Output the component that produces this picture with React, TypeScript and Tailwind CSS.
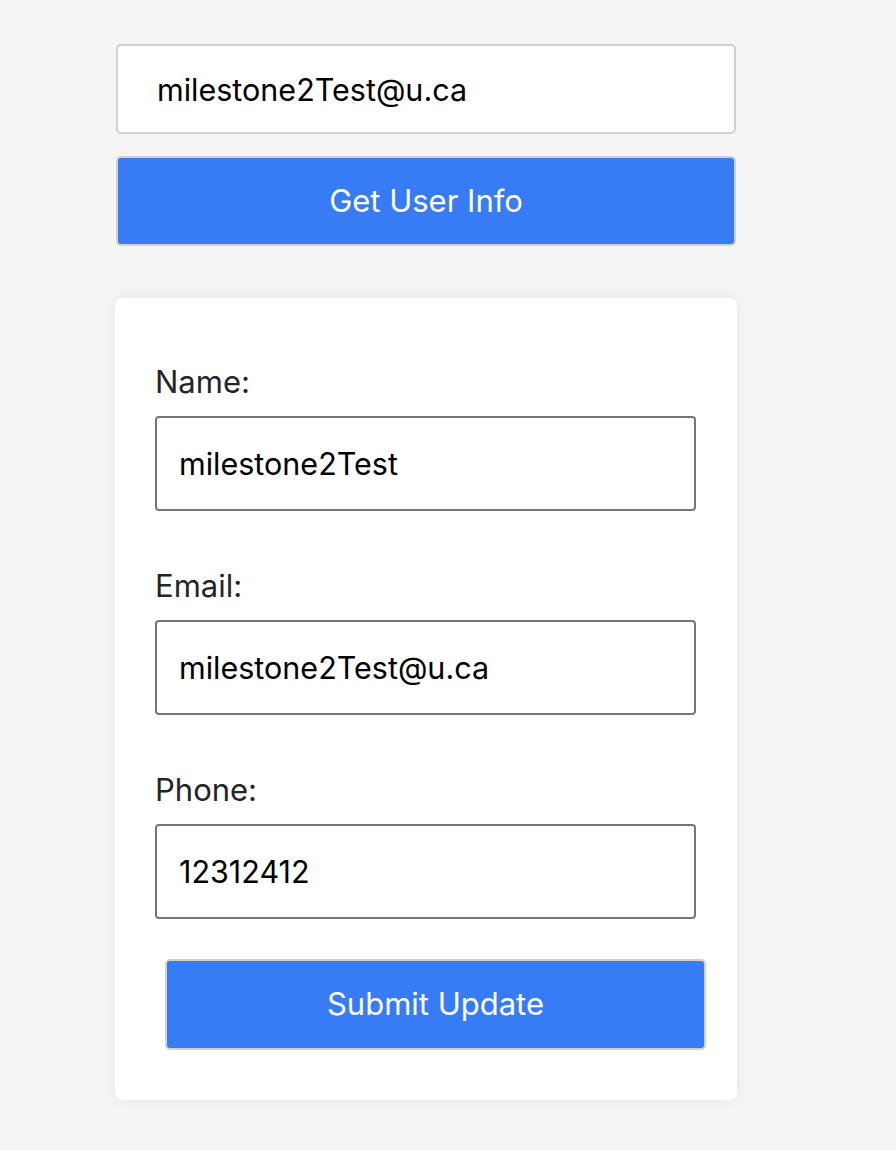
export default function App() {
  return (
    <div className="min-h-[1150px] bg-[#f5f5f5] pt-[44px] pl-[115px] font-['Inter','Liberation_Sans',sans-serif]">
      <div className="w-[622px]">
        <div className="px-px">
          <input
            type="text"
            defaultValue="milestone2Test@u.ca"
            className="block h-[90px] w-full rounded-[5px] border-2 border-[#d0d0d0] bg-white pl-[39px] text-[30.5px] text-black outline-none"
          />
          <button className="mt-[22px] block h-[90px] w-full rounded-[5px] border-2 border-[#d0d0d0] bg-[#377bf5] text-[31px] text-white">
            Get User Info
          </button>
        </div>

        <div className="mt-[52px] rounded-[8px] bg-white pl-[40px] pr-[41px] pt-[65px] pb-[50px] shadow-[0_0_14px_rgba(0,0,0,0.07)]">
          <form>
            {[
              ['Name:', 'milestone2Test'],
              ['Email:', 'milestone2Test@u.ca'],
              ['Phone:', '12312412'],
            ].map(([label, value], i) => (
              <div key={label} className={i > 0 ? 'mt-[56px]' : ''}>
                <label className="block text-[31px] leading-[38px] text-[#212529]">{label}</label>
                <input
                  type="text"
                  defaultValue={value}
                  className="mt-[15px] block h-[95px] w-full rounded-[4px] border-2 border-[#767676] bg-white pl-[22px] text-[30.5px] text-black outline-none"
                />
              </div>
            ))}
            <button
              type="button"
              className="ml-[10px] mt-[40px] block h-[91px] w-full rounded-[5px] border-2 border-[#d0d0d0] bg-[#377bf5] text-[31px] text-white"
            >
              Submit Update
            </button>
          </form>
        </div>
      </div>
    </div>
  );
}
